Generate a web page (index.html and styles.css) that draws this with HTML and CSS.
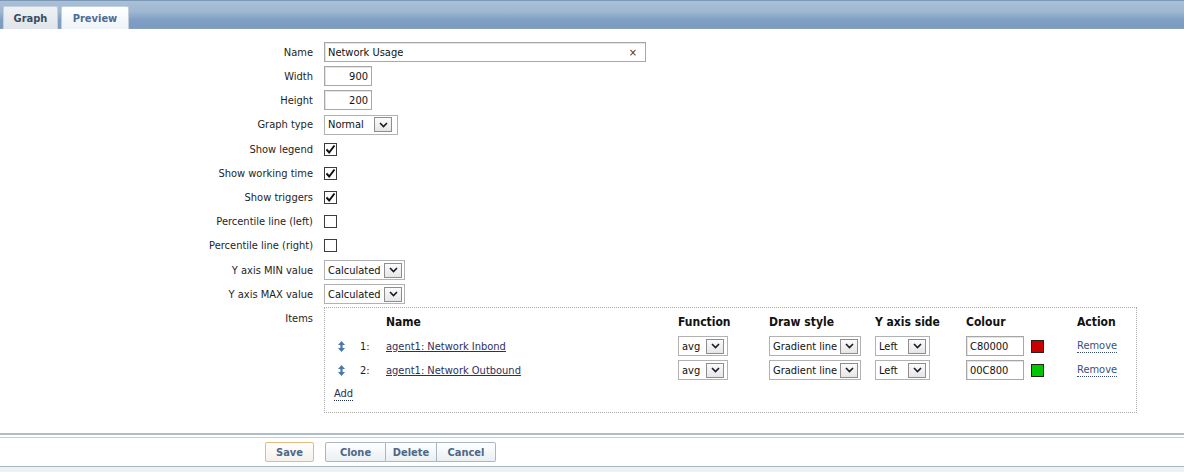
FILE: index.html
```html
<!DOCTYPE html>
<html>
<head>
<meta charset="utf-8">
<link rel="stylesheet" href="styles.css">
</head>
<body>
<div class="topbar">
  <div class="tab tab-active">Graph</div>
  <div class="tab">Preview</div>
</div>

<div class="form">
  <div class="row"><div class="label">Name</div><div class="field"><div class="input input-name"><span>Network Usage</span><span class="clear">×</span></div></div></div>
  <div class="row"><div class="label">Width</div><div class="field"><div class="input input-num">900</div></div></div>
  <div class="row"><div class="label">Height</div><div class="field"><div class="input input-num">200</div></div></div>
  <div class="row tall"><div class="label">Graph type</div><div class="field"><div class="select w-type"><span>Normal</span><span class="dd"><svg width="9" height="6" viewBox="0 0 9 6"><path d="M1 1 L4.5 4.5 L8 1" fill="none" stroke="#1a1a2a" stroke-width="1.6"/></svg></span></div></div></div>
  <div class="row"><div class="label">Show legend</div><div class="field"><span class="cb"><svg width="11" height="11" viewBox="0 0 11 11"><path d="M1.5 5.5 L4.2 8.5 L9.5 1.5" fill="none" stroke="#111" stroke-width="2"/></svg></span></div></div>
  <div class="row"><div class="label">Show working time</div><div class="field"><span class="cb"><svg width="11" height="11" viewBox="0 0 11 11"><path d="M1.5 5.5 L4.2 8.5 L9.5 1.5" fill="none" stroke="#111" stroke-width="2"/></svg></span></div></div>
  <div class="row"><div class="label">Show triggers</div><div class="field"><span class="cb"><svg width="11" height="11" viewBox="0 0 11 11"><path d="M1.5 5.5 L4.2 8.5 L9.5 1.5" fill="none" stroke="#111" stroke-width="2"/></svg></span></div></div>
  <div class="row"><div class="label">Percentile line (left)</div><div class="field"><span class="cb"></span></div></div>
  <div class="row tall"><div class="label">Percentile line (right)</div><div class="field"><span class="cb"></span></div></div>
  <div class="row"><div class="label">Y axis MIN value</div><div class="field"><div class="select w-calc"><span>Calculated</span><span class="dd"><svg width="9" height="6" viewBox="0 0 9 6"><path d="M1 1 L4.5 4.5 L8 1" fill="none" stroke="#1a1a2a" stroke-width="1.6"/></svg></span></div></div></div>
  <div class="row"><div class="label">Y axis MAX value</div><div class="field"><div class="select w-calc"><span>Calculated</span><span class="dd"><svg width="9" height="6" viewBox="0 0 9 6"><path d="M1 1 L4.5 4.5 L8 1" fill="none" stroke="#1a1a2a" stroke-width="1.6"/></svg></span></div></div></div>
  <div class="row items-row"><div class="label">Items</div>
    <div class="field">
      <div class="items-box">
        <div class="irow ihead">
          <span></span><span></span><span>Name</span><span>Function</span><span>Draw style</span><span>Y axis side</span><span>Colour</span><span>Action</span>
        </div>
        <div class="irow">
          <span class="drag"><svg width="7" height="11" viewBox="0 0 7 11"><path d="M3.5 0 L7 4 H4.6 V7 H7 L3.5 11 L0 7 H2.4 V4 H0 Z" fill="#4a78ad"/></svg></span>
          <span>1:</span>
          <span><a class="ilink">agent1: Network Inbond</a></span>
          <span><div class="select w-avg"><span>avg</span><span class="dd"><svg width="9" height="6" viewBox="0 0 9 6"><path d="M1 1 L4.5 4.5 L8 1" fill="none" stroke="#1a1a2a" stroke-width="1.6"/></svg></span></div></span>
          <span><div class="select w-grad"><span>Gradient line</span><span class="dd"><svg width="9" height="6" viewBox="0 0 9 6"><path d="M1 1 L4.5 4.5 L8 1" fill="none" stroke="#1a1a2a" stroke-width="1.6"/></svg></span></div></span>
          <span><div class="select w-left"><span>Left</span><span class="dd"><svg width="9" height="6" viewBox="0 0 9 6"><path d="M1 1 L4.5 4.5 L8 1" fill="none" stroke="#1a1a2a" stroke-width="1.6"/></svg></span></div></span>
          <span class="colcell"><div class="input input-col">C80000</div><span class="swatch red"></span></span>
          <span><a class="dlink">Remove</a></span>
        </div>
        <div class="irow">
          <span class="drag"><svg width="7" height="11" viewBox="0 0 7 11"><path d="M3.5 0 L7 4 H4.6 V7 H7 L3.5 11 L0 7 H2.4 V4 H0 Z" fill="#4a78ad"/></svg></span>
          <span>2:</span>
          <span><a class="ilink">agent1: Network Outbound</a></span>
          <span><div class="select w-avg"><span>avg</span><span class="dd"><svg width="9" height="6" viewBox="0 0 9 6"><path d="M1 1 L4.5 4.5 L8 1" fill="none" stroke="#1a1a2a" stroke-width="1.6"/></svg></span></div></span>
          <span><div class="select w-grad"><span>Gradient line</span><span class="dd"><svg width="9" height="6" viewBox="0 0 9 6"><path d="M1 1 L4.5 4.5 L8 1" fill="none" stroke="#1a1a2a" stroke-width="1.6"/></svg></span></div></span>
          <span><div class="select w-left"><span>Left</span><span class="dd"><svg width="9" height="6" viewBox="0 0 9 6"><path d="M1 1 L4.5 4.5 L8 1" fill="none" stroke="#1a1a2a" stroke-width="1.6"/></svg></span></div></span>
          <span class="colcell"><div class="input input-col">00C800</div><span class="swatch green"></span></span>
          <span><a class="dlink">Remove</a></span>
        </div>
        <div class="addrow"><a class="dlink add">Add</a></div>
      </div>
    </div>
  </div>
</div>

<div class="sep"></div>
<div class="footer">
  <button class="btn btn-save">Save</button>
  <div class="btn-group">
    <button class="btn g1">Clone</button><button class="btn g2">Delete</button><button class="btn g3">Cancel</button>
  </div>
</div>
<div class="filler"></div>
</body>
</html>
```
FILE: styles.css
```css
html, body {
  margin: 0;
  padding: 0;
  background: #ffffff;
}
body {
  font-family: "DejaVu Sans Condensed", "DejaVu Sans", sans-serif;
  font-size: 11px;
  color: #1e1e1e;
  width: 1184px;
  height: 472px;
  overflow: hidden;
}

.topbar {
  border-top: 1px solid #7d98b5;
  border-bottom: 1px solid #8aa0b6;
  background: linear-gradient(#a9c0d8 0%, #9fb7d1 40%, #7f9fc4 70%, #7a9bc2 100%);
  display: flex;
  align-items: flex-end;
  padding-left: 3px;
  gap: 3px;
  box-sizing: border-box;
  height: 29px;
}
.tab {
  height: 23px;
  box-sizing: border-box;
  padding: 0 10px;
  display: flex;
  align-items: center;
  font-weight: bold;
  font-size: 11px;
  color: #4c6c93;
  background: linear-gradient(#ffffff, #eef3f7);
  border: 1px solid #c3d0dc;
  border-bottom: none;
  border-radius: 2px 2px 0 0;
  margin-bottom: -1px;
  width: 68px;
  justify-content: center;
}
.tab-active {
  width: 55px;
  color: #3a4c60;
  background: linear-gradient(#eef1f4, #dfe5ea);
  border-color: #c6d0da;
}

.form {
  margin-top: 11px;
  display: flex;
  flex-direction: column;
}
.row {
  display: flex;
  align-items: center;
  height: 24px;
}
.row.tall { height: 25px; }
.label {
  width: 313px;
  text-align: right;
  padding-right: 11px;
  box-sizing: content-box;
  color: #1e1e1e;
}
.field {
  display: flex;
  align-items: center;
}

.input {
  box-sizing: border-box;
  height: 20px;
  border: 1px solid #a7a7a7;
  box-shadow: inset 1px 1px 0 #e4e4e4;
  background: #fff;
  display: flex;
  align-items: center;
  padding: 0 3px;
  color: #111;
}
.input-name {
  width: 322px;
  justify-content: space-between;
}
.clear {
  font-size: 11px;
  color: #333;
  margin-right: 5px;
}
.input-num {
  width: 48px;
  justify-content: flex-end;
}
.input-col {
  width: 58px;
}

.select {
  box-sizing: border-box;
  height: 20px;
  border: 1px solid #b2b2b2;
  background: #fff;
  display: flex;
  align-items: center;
  justify-content: space-between;
  padding: 0 2px 0 3px;
  color: #111;
  white-space: nowrap;
}
.dd {
  box-sizing: border-box;
  width: 18px;
  height: 15px;
  border: 1px solid #8e8e8e;
  background: linear-gradient(#fbfbfb, #e6e6e6);
  display: flex;
  align-items: center;
  justify-content: center;
}
.w-type { width: 74px; }
.w-type .dd { margin-right: 3px; }
.w-calc { width: 81px; }
.w-calc span:first-child { margin-right: 1px; }
.w-avg { width: 50px; }
.w-grad { width: 92px; }
.w-left { width: 55px; }
.w-left .dd, .w-avg .dd { margin-right: 1px; }

.cb {
  box-sizing: border-box;
  width: 13px;
  height: 13px;
  border: 1px solid #3c3c3c;
  background: #fff;
  display: flex;
  align-items: center;
  justify-content: center;
}

.items-row {
  height: auto;
  align-items: flex-start;
}
.items-row .label {
  padding-top: 6px;
}
.items-row .field {
  padding-top: 1px;
}
.items-box {
  box-sizing: border-box;
  width: 813px;
  height: 106px;
  border: 1px dotted #a9a9a9;
  padding: 2px 0 0 9px;
}
.irow {
  display: grid;
  grid-template-columns: 26px 26px 292px 91px 106px 91px 111px 60px;
  height: 24px;
  align-items: center;
}
.irow > span {
  display: flex;
  align-items: center;
}
.ihead {
  font-weight: bold;
  font-size: 12px;
  color: #111;
}
.drag {
  padding-left: 4px;
}
.ilink {
  color: #2f2f5c;
  text-decoration: underline;
}
.dlink {
  color: #3b4f78;
  text-decoration: none;
  border-bottom: 1px dotted #3b4f78;
  line-height: 12px;
}
.colcell {
  gap: 7px;
}
.swatch {
  box-sizing: border-box;
  width: 13px;
  height: 13px;
  border: 1px solid #222;
}
.swatch.red { background: #c80000; }
.swatch.green { background: #00c800; }
.addrow {
  height: 24px;
  display: flex;
  align-items: center;
}
.add { color: #1f2e52; border-bottom-color: #1f2e52; }

.sep {
  margin-top: 20px;
  height: 0;
  border-top: 2px solid #aebbc8;
  margin-bottom: 2px;
}
.footer {
  border-top: 1px solid #c3cdd7;
  border-bottom: 1px solid #a9b6c3;
  height: 28px;
  box-sizing: content-box;
  display: flex;
  align-items: center;
  padding-left: 265px;
  gap: 11px;
}
.btn {
  font-family: "DejaVu Sans Condensed", "DejaVu Sans", sans-serif;
  font-size: 11px;
  font-weight: bold;
  color: #4d6888;
  height: 20px;
  box-sizing: border-box;
  border: 1px solid #a9b7c5;
  background: linear-gradient(#ffffff, #eaeff3);
  padding: 0;
  margin: 0;
  cursor: pointer;
}
.btn-save {
  width: 49px;
  border-color: #e2be7e;
  border-radius: 2px;
  background: linear-gradient(#ffffff, #f4f1ea);
}
.btn-group {
  display: flex;
}
.btn-group .btn { border-radius: 0; }
.g1 { width: 61px; border-radius: 2px 0 0 2px !important; }
.g2 { width: 51px; border-left: none; }
.g3 { width: 59px; border-left: none; border-radius: 0 2px 2px 0 !important; }
.filler {
  height: 10px;
  background: #eef1f4;
}
```
